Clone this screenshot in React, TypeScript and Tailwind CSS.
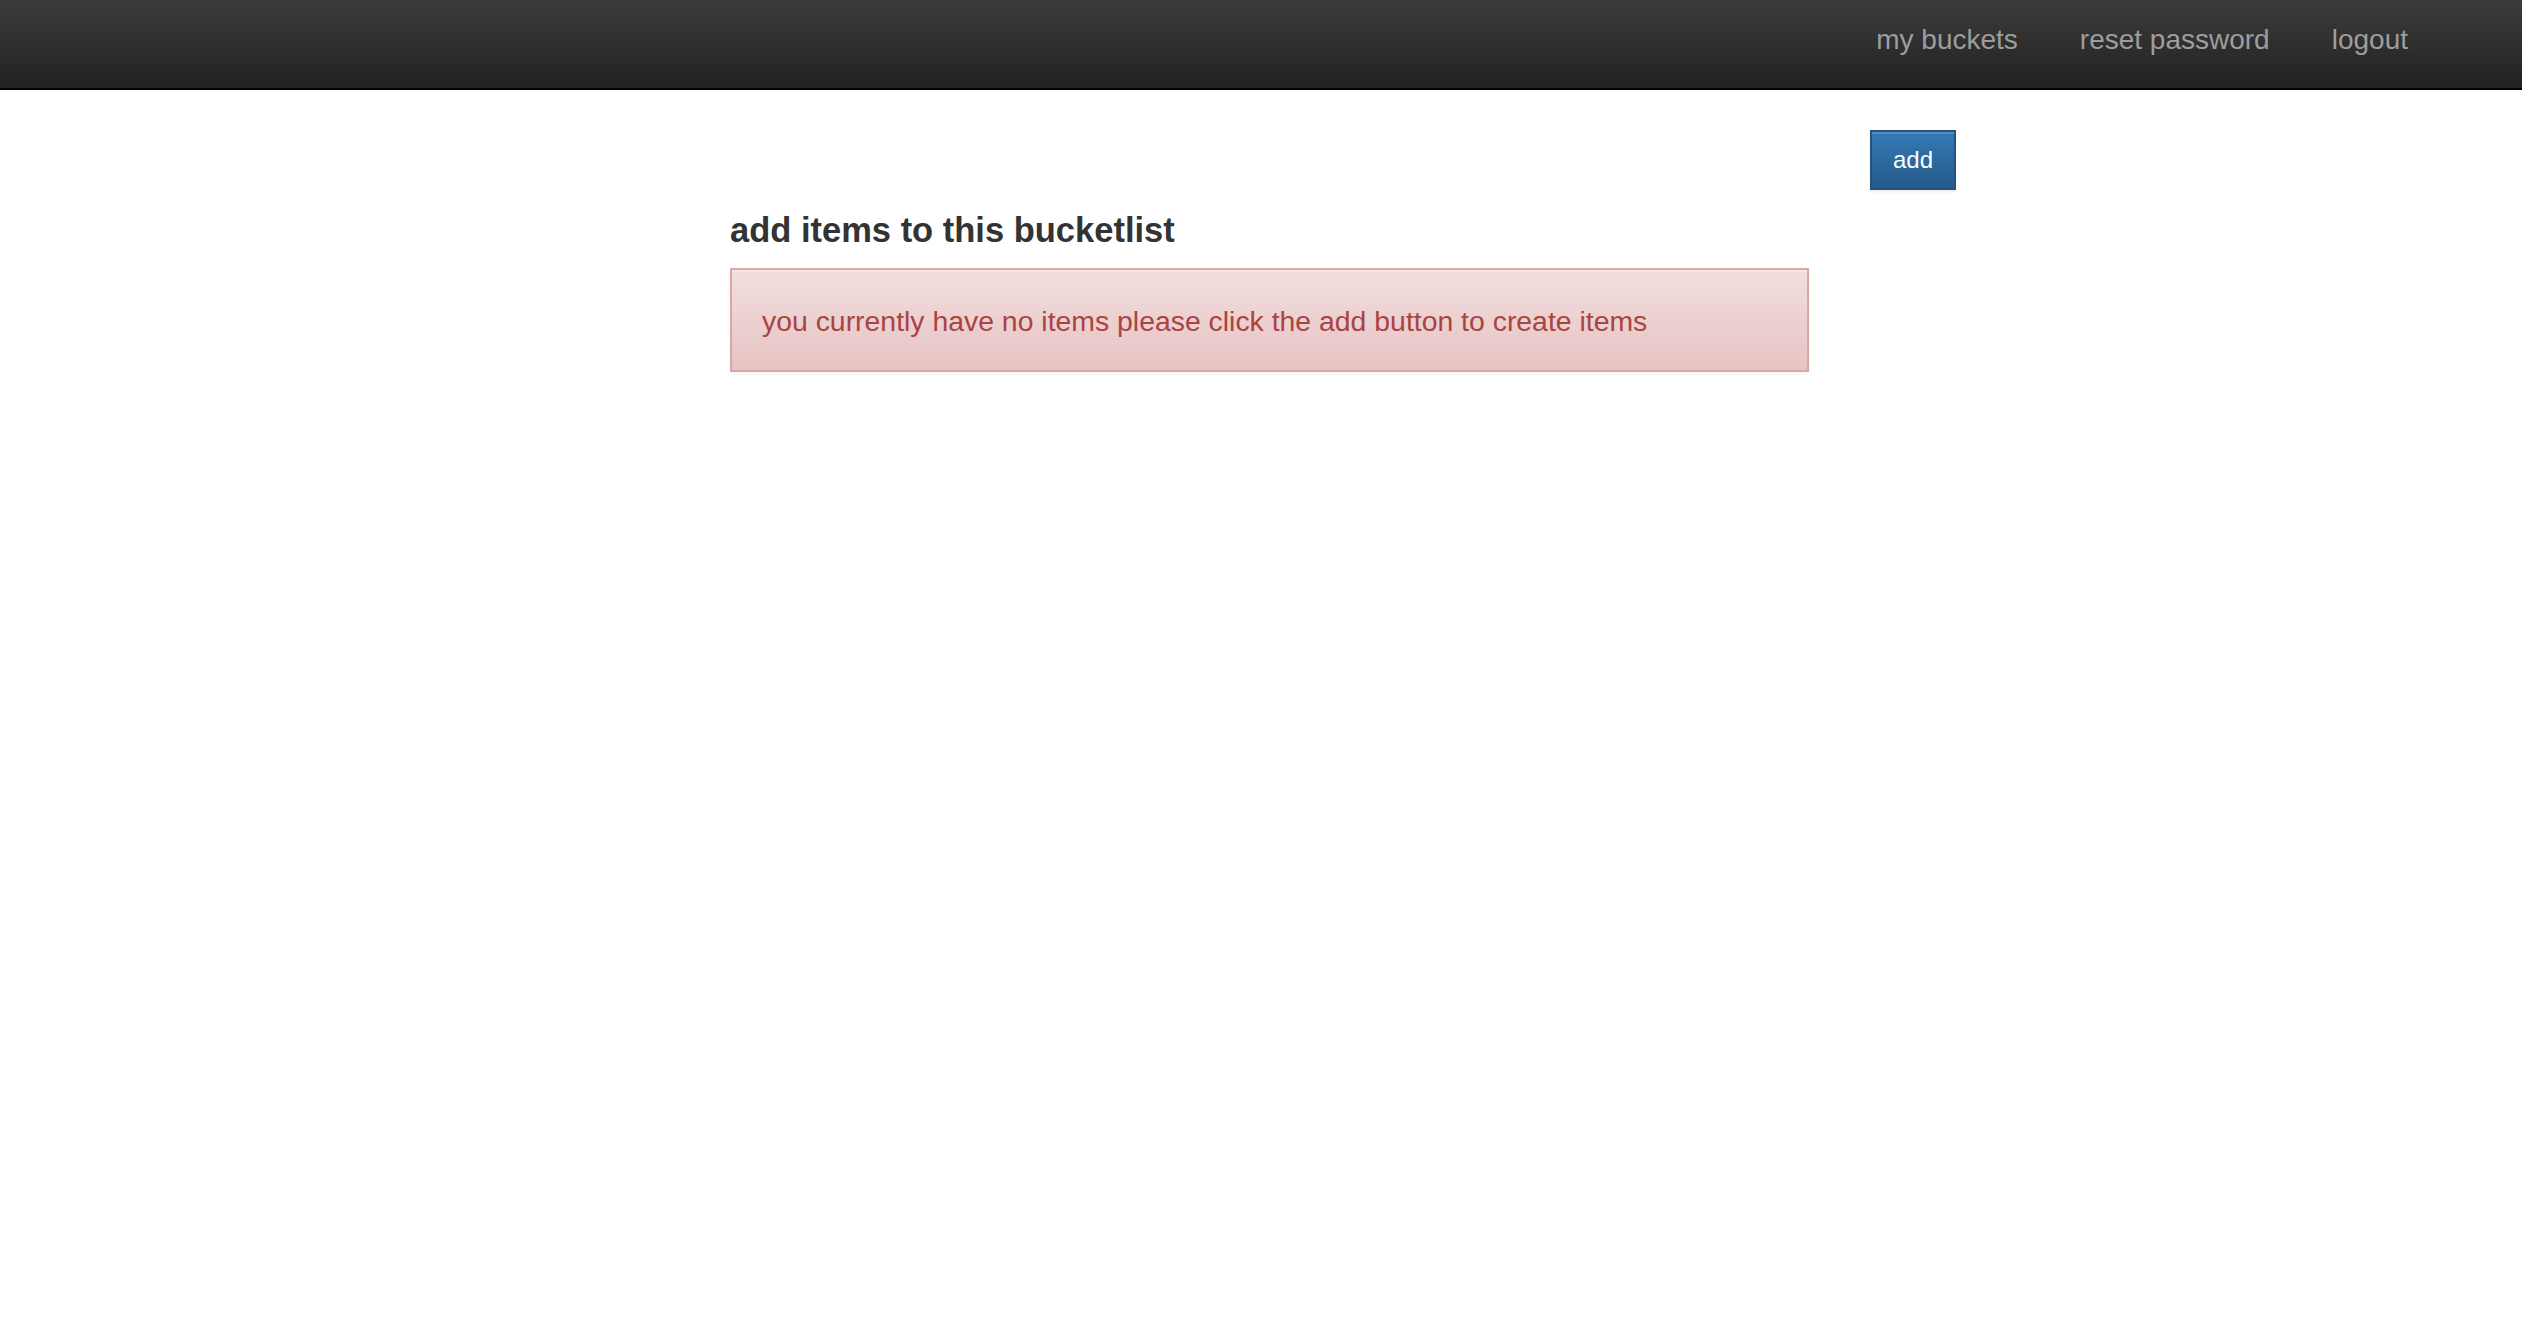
const navLinks = ["my buckets", "reset password", "logout"];

function Navbar() {
  return (
    <div className="h-[90px] border-b-2 border-black bg-gradient-to-b from-[#3c3c3c] to-[#222222]">
      <ul className="flex justify-end gap-[62px] pr-[114px] pt-[20px]">
        {navLinks.map((link) => (
          <li key={link}>
            <a href="#" className="block text-[28px] leading-[40px] text-[#9d9d9d]">
              {link}
            </a>
          </li>
        ))}
      </ul>
    </div>
  );
}

export default function App() {
  return (
    <div className="min-h-screen bg-white [font-family:'Liberation_Sans',Arial,sans-serif]">
      <Navbar />
      <div className="flex justify-end pr-[566px] pt-[40px]">
        <button className="h-[60px] w-[86px] rounded-none border-2 border-[#245580] bg-gradient-to-b from-[#337ab7] to-[#265a88] text-[24px] leading-[24px] text-white shadow-[inset_0_2px_0_rgba(255,255,255,0.15),0_2px_2px_rgba(0,0,0,0.075)]">
          add
        </button>
      </div>
      <div className="ml-[730px] w-[1079px]">
        <h4 className="mb-[19px] mt-[21px] text-[34.5px] font-bold leading-[38px] text-[#333333]">
          add items to this bucketlist
        </h4>
        <div className="border-2 border-[#dca7a7] bg-gradient-to-b from-[#f2dede] to-[#e7c3c3] pb-[29px] pl-[30px] pt-[31px] text-[28.4px] leading-[40px] text-[#a94442] shadow-[inset_0_2px_0_rgba(255,255,255,0.25),0_2px_4px_rgba(0,0,0,0.05)]">
          you currently have no items please click the add button to create items
        </div>
      </div>
    </div>
  );
}
